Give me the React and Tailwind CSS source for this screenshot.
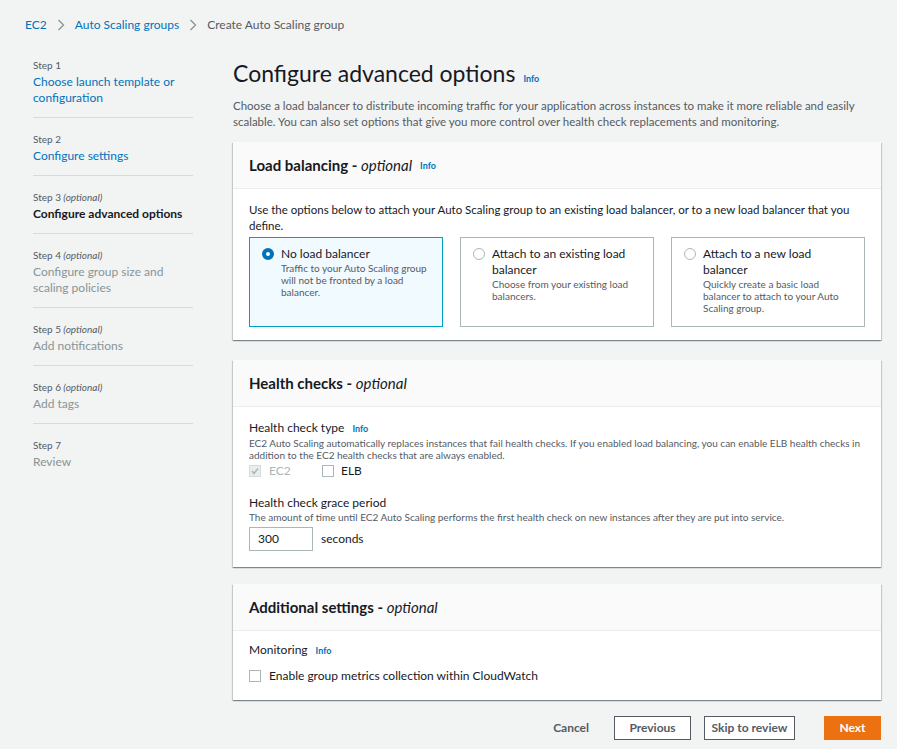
import React from "react";

const font = { fontFamily: "Lato, 'Noto Sans', sans-serif" };

function Info({ className = "" }) {
  return <span className={`text-[9px] font-bold text-[#0073bb] ${className}`}>Info</span>;
}

function Chevron() {
  return (
    <svg width="8" height="12" viewBox="0 0 8 12" className="mx-[10px]">
      <path d="M1.5 1 L6.5 6 L1.5 11" fill="none" stroke="#879596" strokeWidth="1.3" />
    </svg>
  );
}

function NavItem({ step, optional, title, state, first, last }) {
  const color =
    state === "link" ? "text-[#0073bb]" : state === "active" ? "text-[#16191f] font-bold" : "text-[#879596]";
  return (
    <div className={`${first ? "" : "pt-[14px]"} ${last ? "" : "pb-[11px] border-b border-[#d5dbdb]"}`}>
      <div className="text-[10px] leading-[14px] text-[#545b64]">
        Step {step}
        {optional && <i> (optional)</i>}
      </div>
      <div className={`mt-[2px] text-[12px] leading-[16px] ${color}`}>{title}</div>
    </div>
  );
}

function Card({ title, info, children }) {
  return (
    <div className="bg-white shadow-[0_1px_1px_0_rgba(0,28,36,0.3),1px_1px_1px_0_rgba(0,28,36,0.15),-1px_1px_1px_0_rgba(0,28,36,0.15)]">
      <div className="h-[47px] bg-[#fafafa] border-b border-[#eaeded] flex items-center px-[16px]">
        <span className="text-[15px] font-bold text-[#16191f]">
          {title} - <i className="font-normal">optional</i>
        </span>
        {info && <Info className="ml-[8px] mt-[2px]" />}
      </div>
      {children}
    </div>
  );
}

function Radio({ selected }) {
  return selected ? (
    <span className="mt-[2px] w-[12px] h-[12px] rounded-full border-[4px] border-[#0073bb] bg-white shrink-0" />
  ) : (
    <span className="mt-[2px] w-[12px] h-[12px] rounded-full border border-[#aab7b8] bg-white shrink-0" />
  );
}

function Tile({ selected, title, desc }) {
  return (
    <div
      className={`flex-1 h-[90px] border pl-[12px] pt-[8px] flex gap-[7px] ${
        selected ? "border-[#00a1c9] bg-[#f1faff]" : "border-[#aab7b8] bg-white"
      }`}
    >
      <Radio selected={selected} />
      <div className="w-[149px]">
        <div className="text-[12px] leading-[16px] text-[#16191f]">{title}</div>
        <div className="text-[10px] leading-[12px] text-[#545b64]">{desc}</div>
      </div>
    </div>
  );
}

function Checkbox({ checked, disabled }) {
  return (
    <span
      className={`w-[12px] h-[12px] border flex items-center justify-center ${
        disabled ? "border-[#d5dbdb] bg-[#eaeded]" : "border-[#aab7b8] bg-white"
      }`}
    >
      {checked && (
        <svg width="10" height="10" viewBox="0 0 10 10">
          <path d="M2 5 L4 7.5 L8 2.5" fill="none" stroke={disabled ? "#aab7b8" : "#fff"} strokeWidth="1.5" />
        </svg>
      )}
    </span>
  );
}

export default function App() {
  return (
    <div style={font} className="w-full min-h-[749px] bg-[#f2f3f3] text-[#16191f]">
      <div className="pl-[25px] pt-[17px] h-[58px] flex items-start text-[12px] leading-[16px]">
        <span className="text-[#0073bb]">EC2</span>
        <span className="h-[16px] flex items-center"><Chevron /></span>
        <span className="text-[#0073bb]">Auto Scaling groups</span>
        <span className="h-[16px] flex items-center"><Chevron /></span>
        <span className="text-[#545b64]">Create Auto Scaling group</span>
      </div>
      <div className="flex pl-[33px] pr-[16px]">
        <div className="w-[160px] shrink-0">
          <NavItem first step={1} title="Choose launch template or configuration" state="link" />
          <NavItem step={2} title="Configure settings" state="link" />
          <NavItem step={3} optional title="Configure advanced options" state="active" />
          <NavItem step={4} optional title="Configure group size and scaling policies" state="disabled" />
          <NavItem step={5} optional title="Add notifications" state="disabled" />
          <NavItem step={6} optional title="Add tags" state="disabled" />
          <NavItem last step={7} title="Review" state="disabled" />
        </div>
        <div className="ml-[40px] flex-1">
          <div className="flex items-baseline">
            <h1 className="text-[23px] leading-[30px] text-[#16191f]">Configure advanced options</h1>
            <Info className="ml-[8px]" />
          </div>
          <p className="mt-[10px] text-[11.5px] leading-[16px] text-[#545b64]">
            Choose a load balancer to distribute incoming traffic for your application across instances to make it more
            reliable and easily scalable. You can also set options that give you more control over health check
            replacements and monitoring.
          </p>
          <div className="mt-[12px]">
            <Card title="Load balancing" info>
              <div className="px-[16px] pt-[13px] pb-[13px]">
                <p className="text-[11.5px] leading-[16px] text-[#16191f]">
                  Use the options below to attach your Auto Scaling group to an existing load balancer, or to a new load
                  balancer that you define.
                </p>
                <div className="mt-[3px] flex gap-[17px]">
                  <Tile
                    selected
                    title="No load balancer"
                    desc="Traffic to your Auto Scaling group will not be fronted by a load balancer."
                  />
                  <Tile title="Attach to an existing load balancer" desc="Choose from your existing load balancers." />
                  <Tile
                    title="Attach to a new load balancer"
                    desc="Quickly create a basic load balancer to attach to your Auto Scaling group."
                  />
                </div>
              </div>
            </Card>
          </div>
          <div className="mt-[20px]">
            <Card title="Health checks">
              <div className="px-[16px] pt-[13px] pb-[16px]">
                <div className="flex items-baseline text-[12px] leading-[16px]">
                  Health check type <Info className="ml-[8px]" />
                </div>
                <p className="text-[10px] leading-[12px] text-[#545b64]">
                  EC2 Auto Scaling automatically replaces instances that fail health checks. If you enabled load
                  balancing, you can enable ELB health checks in addition to the EC2 health checks that are always
                  enabled.
                </p>
                <div className="mt-[2px] flex items-center text-[12px] leading-[16px]">
                  <Checkbox checked disabled />
                  <span className="ml-[8px] text-[#aab7b8] w-[53px]">EC2</span>
                  <Checkbox />
                  <span className="ml-[7px]">ELB</span>
                </div>
                <div className="mt-[16px] text-[12px] leading-[16px]">Health check grace period</div>
                <p className="text-[10px] leading-[12px] text-[#545b64]">
                  The amount of time until EC2 Auto Scaling performs the first health check on new instances after they
                  are put into service.
                </p>
                <div className="mt-[4px] flex items-center text-[12px]">
                  <div className="w-[64px] h-[24px] border border-[#aab7b8] bg-white flex items-center pl-[8px]">300</div>
                  <span className="ml-[8px]">seconds</span>
                </div>
              </div>
            </Card>
          </div>
          <div className="mt-[17px]">
            <Card title="Additional settings">
              <div className="px-[16px] pt-[11px] pb-[16px]">
                <div className="flex items-baseline text-[12px] leading-[16px]">
                  Monitoring <Info className="ml-[8px]" />
                </div>
                <div className="mt-[9px] flex items-center text-[12px] leading-[16px]">
                  <Checkbox />
                  <span className="ml-[8px]">Enable group metrics collection within CloudWatch</span>
                </div>
              </div>
            </Card>
          </div>
          <div className="mt-[16px] flex justify-end items-center gap-[13px] text-[12px] font-bold">
            <span className="text-[#545b64] mr-[12px]">Cancel</span>
            <button className="h-[24px] w-[77px] border border-[#545b64] bg-white text-[#545b64]">Previous</button>
            <button className="h-[24px] w-[91px] border border-[#545b64] bg-white text-[#545b64]">Skip to review</button>
            <button className="h-[24px] w-[57px] ml-[16px] bg-[#ec7211] text-white">Next</button>
          </div>
        </div>
      </div>
    </div>
  );
}
